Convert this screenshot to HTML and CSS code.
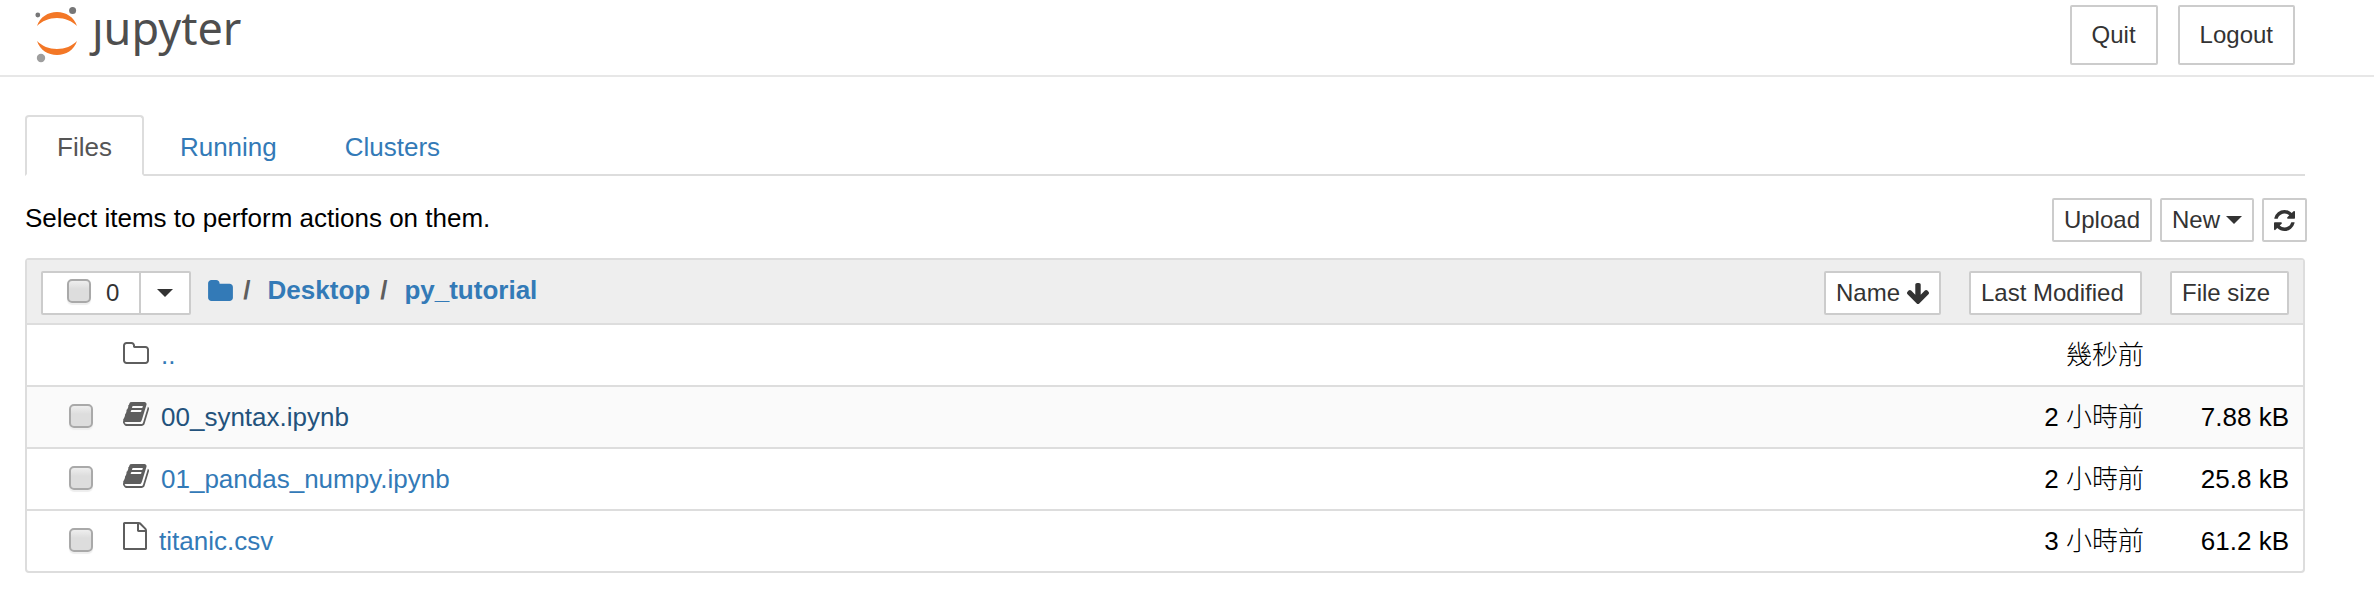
FILE: index.html
```
<!DOCTYPE html>
<html lang="zh-Hant">
<head>
<meta charset="utf-8">
<title>Jupyter</title>
<link rel="stylesheet" href="styles.css">
</head>
<body>
<header class="header">
  <a class="logo" href="#" aria-label="jupyter">
    <svg class="logo-mark" viewBox="0 0 44 58" aria-hidden="true">
      <path class="logo-arc" d="M3 21C6 12 14 7 23 7s17 5 20 14C38 16 31 13 23 13S8 16 3 21z"/>
      <path class="logo-arc" d="M3 36C6 45 14 50 23 50s17-5 20-14C38 41 31 44 23 44S8 41 3 36z"/>
      <circle class="logo-moon" cx="3.8" cy="10" r="2.4"/>
      <circle class="logo-moon" cx="38.6" cy="5.6" r="3.5"/>
      <circle class="logo-moon-light" cx="7" cy="53" r="4.2"/>
    </svg>
    <span class="logo-text">ȷupyter</span>
  </a>
  <div class="session">
    <button class="btn btn-large" type="button">Quit</button>
    <button class="btn btn-large" type="button">Logout</button>
  </div>
</header>
<main class="main">
  <nav class="tabs">
    <a class="tab tab-active" href="#">Files</a>
    <a class="tab" href="#">Running</a>
    <a class="tab" href="#">Clusters</a>
  </nav>
  <div class="toolbar">
    <p class="hint">Select items to perform actions on them.</p>
    <div class="actions">
      <button class="btn" type="button">Upload</button>
      <button class="btn btn-new" type="button">New<span class="caret"></span></button>
      <button class="btn btn-refresh" type="button" aria-label="Refresh">
        <svg class="icon-refresh" viewBox="128 128 1536 1536" aria-hidden="true"><path d="M1639 1056q0 5-1 7-64 268-268 434.5t-478 166.5q-146 0-282.5-55t-243.5-157l-129 129q-19 19-45 19t-45-19-19-45v-448q0-26 19-45t45-19h448q26 0 45 19t19 45-19 45l-137 137q71 66 161 102t187 36q134 0 250-65t186-179q11-17 53-117 8-23 30-23h192q13 0 22.5 9.5t9.5 22.5zm25-800v448q0 26-19 45t-45 19h-448q-26 0-45-19t-19-45 19-45l138-138q-148-137-349-137-134 0-250 65t-186 179q-11 17-53 117-8 23-30 23h-199q-13 0-22.5-9.5t-9.5-22.5v-7q65-268 270-434.5t480-166.5q146 0 284 55.5t245 156.5l130-129q19-19 45-19t45 19 19 45z"/></svg>
      </button>
    </div>
  </div>
  <div class="list">
    <table class="files">
      <thead>
        <tr>
          <th class="col-name">
            <div class="list-head">
              <div class="select-group">
                <label class="select-all"><input class="check" type="checkbox" aria-label="Select all"><span>0</span></label>
                <button class="select-menu" type="button" aria-label="Select by type"><span class="caret"></span></button>
              </div>
              <nav class="crumbs">
                <a class="crumb-root" href="#" aria-label="Home"><svg class="icon-folder" viewBox="64 128 1664 1408" aria-hidden="true"><path d="M1728 608v704q0 92-66 158t-158 66h-1216q-92 0-158-66t-66-158v-960q0-92 66-158t158-66h320q92 0 158 66t66 158v32h672q92 0 158 66t66 158z"/></svg></a>
                <span class="slash">/</span>
                <a class="crumb" href="#">Desktop</a>
                <span class="slash">/</span>
                <a class="crumb" href="#">py_tutorial</a>
              </nav>
              <button class="btn btn-sort" type="button">Name<svg class="icon-arrow" viewBox="117 64 1558 1547" aria-hidden="true"><path d="M1675 832q0 53-37 90l-651 652q-39 37-91 37-53 0-90-37l-651-652q-38-36-38-90 0-53 38-91l74-75q39-37 91-37 53 0 90 37l294 294v-704q0-52 38-90t90-38h128q52 0 90 38t38 90v704l294-294q37-37 90-37 52 0 91 37l75 75q37 39 37 91z"/></svg></button>
            </div>
          </th>
          <th class="col-date"><button class="btn btn-column" type="button">Last Modified</button></th>
          <th class="col-size"><button class="btn btn-column" type="button">File size</button></th>
        </tr>
      </thead>
      <tbody>
        <tr>
          <td><div class="item item-parent"><svg class="icon icon-dir" viewBox="64 128 1664 1408" aria-hidden="true"><path d="M1600 1312v-704q0-40-28-68t-68-28h-704q-40 0-68-28t-28-68v-64q0-40-28-68t-68-28h-320q-40 0-68 28t-28 68v960q0 40 28 68t68 28h1216q40 0 68-28t28-68zm128-704v704q0 92-66 158t-158 66h-1216q-92 0-158-66t-66-158v-960q0-92 66-158t158-66h320q92 0 158 66t66 158v32h672q92 0 158 66t66 158z"/></svg><a href="#">..</a></div></td>
          <td class="date">幾秒前</td>
          <td class="size"></td>
        </tr>
        <tr class="hovered">
          <td><div class="item"><input class="check" type="checkbox" aria-label="00_syntax.ipynb"><svg class="icon icon-book" viewBox="64 128 1664 1536" aria-hidden="true"><path d="M1703 478q40 57 18 129l-275 906q-19 64-76.5 107.5t-122.5 43.5h-923q-77 0-148.5-53.5t-99.5-131.5q-24-67-2-127 0-4 3-27t4-37q1-8-3-21.5t-3-19.5q2-11 8-21t16.5-23.5 16.5-23.5q23-38 45-91.5t30-91.5q3-10 .5-30t-.5-28q3-11 17-28t17-23q21-36 42-92t25-90q1-9-2.5-32t.5-28q4-13 22-30.5t22-22.5q19-26 42.5-84.5t27.5-96.5q1-8-3-25.5t-2-26.5q2-8 9-18t18-23 17-21q8-12 16.5-30.5t15-35 16-36 19.5-32 26.5-23.5 36-11.5 47.5 5.5l-1 3q38-9 51-9h761q74 0 114 56t18 130l-274 906q-36 119-71.5 153.5t-128.5 34.5h-869q-27 0-38 15-11 16-1 43 24 70 144 70h923q29 0 56-15.5t35-41.5l300-987q7-22 5-57 38 15 59 43zm-1064 2q-4 13 2 22.5t20 9.5h608q13 0 25.5-9.5t16.5-22.5l21-64q4-13-2-22.5t-20-9.5h-608q-13 0-25.5 9.5t-16.5 22.5zm-83 256q-4 13 2 22.5t20 9.5h608q13 0 25.5-9.5t16.5-22.5l21-64q4-13-2-22.5t-20-9.5h-608q-13 0-25.5 9.5t-16.5 22.5z"/></svg><a href="#">00_syntax.ipynb</a></div></td>
          <td class="date">2 小時前</td>
          <td class="size">7.88 kB</td>
        </tr>
        <tr>
          <td><div class="item"><input class="check" type="checkbox" aria-label="01_pandas_numpy.ipynb"><svg class="icon icon-book" viewBox="64 128 1664 1536" aria-hidden="true"><path d="M1703 478q40 57 18 129l-275 906q-19 64-76.5 107.5t-122.5 43.5h-923q-77 0-148.5-53.5t-99.5-131.5q-24-67-2-127 0-4 3-27t4-37q1-8-3-21.5t-3-19.5q2-11 8-21t16.5-23.5 16.5-23.5q23-38 45-91.5t30-91.5q3-10 .5-30t-.5-28q3-11 17-28t17-23q21-36 42-92t25-90q1-9-2.5-32t.5-28q4-13 22-30.5t22-22.5q19-26 42.5-84.5t27.5-96.5q1-8-3-25.5t-2-26.5q2-8 9-18t18-23 17-21q8-12 16.5-30.5t15-35 16-36 19.5-32 26.5-23.5 36-11.5 47.5 5.5l-1 3q38-9 51-9h761q74 0 114 56t18 130l-274 906q-36 119-71.5 153.5t-128.5 34.5h-869q-27 0-38 15-11 16-1 43 24 70 144 70h923q29 0 56-15.5t35-41.5l300-987q7-22 5-57 38 15 59 43zm-1064 2q-4 13 2 22.5t20 9.5h608q13 0 25.5-9.5t16.5-22.5l21-64q4-13-2-22.5t-20-9.5h-608q-13 0-25.5 9.5t-16.5 22.5zm-83 256q-4 13 2 22.5t20 9.5h608q13 0 25.5-9.5t16.5-22.5l21-64q4-13-2-22.5t-20-9.5h-608q-13 0-25.5 9.5t-16.5 22.5z"/></svg><a href="#">01_pandas_numpy.ipynb</a></div></td>
          <td class="date">2 小時前</td>
          <td class="size">25.8 kB</td>
        </tr>
        <tr>
          <td><div class="item"><input class="check" type="checkbox" aria-label="titanic.csv"><svg class="icon icon-file" viewBox="128 0 1536 1792" aria-hidden="true"><path d="M1596 380q28 28 48 76t20 88v1152q0 40-28 68t-68 28h-1344q-40 0-68-28t-28-68v-1600q0-40 28-68t68-28h896q40 0 88 20t76 48zm-444-244v376h376q-10-29-22-41l-313-313q-12-12-41-22zm384 1528v-1024h-416q-40 0-68-28t-28-68v-416h-768v1536h1280z"/></svg><a href="#">titanic.csv</a></div></td>
          <td class="date">3 小時前</td>
          <td class="size">61.2 kB</td>
        </tr>
      </tbody>
    </table>
  </div>
</main>
</body>
</html>
```
FILE: styles.css
```
* {
  box-sizing: border-box;
}

body {
  margin: 0;
  background: #fff;
  color: #000;
  font-family: "Liberation Sans", "Noto Sans CJK TC", sans-serif;
  font-size: 26px;
  line-height: 36px;
}

a {
  color: #337ab7;
  text-decoration: none;
}

svg {
  display: block;
  flex: none;
  fill: currentColor;
}

.header {
  display: flex;
  justify-content: space-between;
  align-items: flex-start;
  padding: 5px 79px 10px 34px;
  border-bottom: 2px solid #e7e7e7;
}

.logo {
  display: flex;
  gap: 14px;
  height: 60px;
  color: #4e4e4e;
}

.logo-mark {
  width: 44px;
  height: 58px;
}

.logo-arc {
  fill: #f37726;
}

.logo-moon {
  fill: #767677;
}

.logo-moon-light {
  fill: #9e9e9e;
}

.logo-text {
  font-family: "Noto Sans", sans-serif;
  font-size: 45px;
  line-height: 46px;
}

.session {
  display: flex;
  gap: 20px;
}

.btn {
  display: flex;
  align-items: center;
  height: 44px;
  padding: 0 10px;
  border: 2px solid #ccc;
  border-radius: 2px;
  background: #fff;
  color: #333;
  font-family: inherit;
  font-size: 24px;
  line-height: 36px;
  white-space: nowrap;
}

.btn-large {
  height: 60px;
  padding: 0 20px;
}

.caret {
  border: 8px solid transparent;
  border-top-color: #333;
  border-bottom: 0;
}

.main {
  padding: 38px 69px 25px 25px;
}

.tabs {
  display: flex;
  gap: 4px;
  border-bottom: 2px solid #ddd;
}

.tab {
  margin-bottom: -2px;
  padding: 12px 30px 9px;
  border: 2px solid transparent;
  border-bottom: 2px solid #ddd;
  border-radius: 4px 4px 0 0;
}

.tab-active {
  border-color: #ddd;
  border-bottom-color: #fff;
  color: #555;
}

.toolbar {
  display: flex;
  justify-content: space-between;
  margin: 22px -2px 16px 0;
}

.hint {
  margin: 0;
  padding-top: 2px;
}

.actions {
  display: flex;
  gap: 8px;
}

.btn-new {
  gap: 6px;
}

.icon-refresh {
  width: 21px;
  height: 21px;
}

.list {
  border: 2px solid #ddd;
  border-radius: 4px;
}

.files {
  width: 100%;
  border-spacing: 0;
}

th {
  padding: 11px 0 8px;
  border-bottom: 2px solid #ddd;
  background: #eee;
  text-align: left;
}

.col-date {
  width: 203px;
  padding-right: 2px;
  padding-left: 28px;
}

.col-size {
  width: 159px;
  padding-right: 14px;
  padding-left: 26px;
}

.list-head {
  display: flex;
  align-items: center;
  padding-left: 14px;
}

.select-group {
  display: flex;
  height: 44px;
  border: 2px solid #ccc;
  border-radius: 2px;
  background: #fff;
  color: #333;
  font-size: 24px;
  font-weight: normal;
}

.select-all {
  display: flex;
  align-items: center;
  gap: 15px;
  padding: 0 20px 0 24px;
}

.select-menu {
  padding: 0 16px;
  border: 0;
  border-left: 2px solid #ccc;
  background: #fff;
}

.select-menu .caret {
  display: block;
}

.check {
  flex: none;
  width: 24px;
  height: 24px;
  margin: 0;
  appearance: none;
  border: 2px solid #a9a9a9;
  border-radius: 5px;
  background: linear-gradient(#eee, #ddd 40%);
  box-shadow: 0 2px 1px #eee;
}

.item .check {
  margin-bottom: 2px;
}

.select-all .check {
  margin-bottom: 4px;
}

.crumbs {
  display: flex;
  align-items: center;
  gap: 10px;
  padding: 0 0 6px 17px;
}

.icon-folder {
  width: 25px;
  height: 21px;
}

.slash {
  padding-right: 7px;
  color: #5e5e5e;
}

.btn-sort {
  gap: 7px;
  margin-left: auto;
}

.icon-arrow {
  width: 22px;
  height: 22px;
}

.btn-column {
  width: 100%;
}

td {
  height: 62px;
  padding: 0;
  border-bottom: 2px solid #ddd;
}

tbody tr:last-child td {
  height: 60px;
  border-bottom: 0;
}

.hovered {
  background: #fafafa;
}

.hovered a {
  color: #23527c;
}

.item {
  display: flex;
  align-items: center;
  gap: 12px;
  padding-left: 42px;
}

.item-parent {
  padding-left: 96px;
}

.icon {
  box-sizing: content-box;
  color: #5e5e5e;
}

.check + .icon {
  margin-left: 18px;
}

.icon-dir {
  width: 26px;
  height: 22px;
  padding-bottom: 4px;
}

.icon-book {
  width: 26px;
  height: 24px;
  padding-bottom: 6px;
}

.icon-file {
  width: 24px;
  height: 28px;
  padding-bottom: 10px;
}

.date {
  font-weight: 300;
  text-align: right;
}

.size {
  padding-right: 14px;
  text-align: right;
}
```
